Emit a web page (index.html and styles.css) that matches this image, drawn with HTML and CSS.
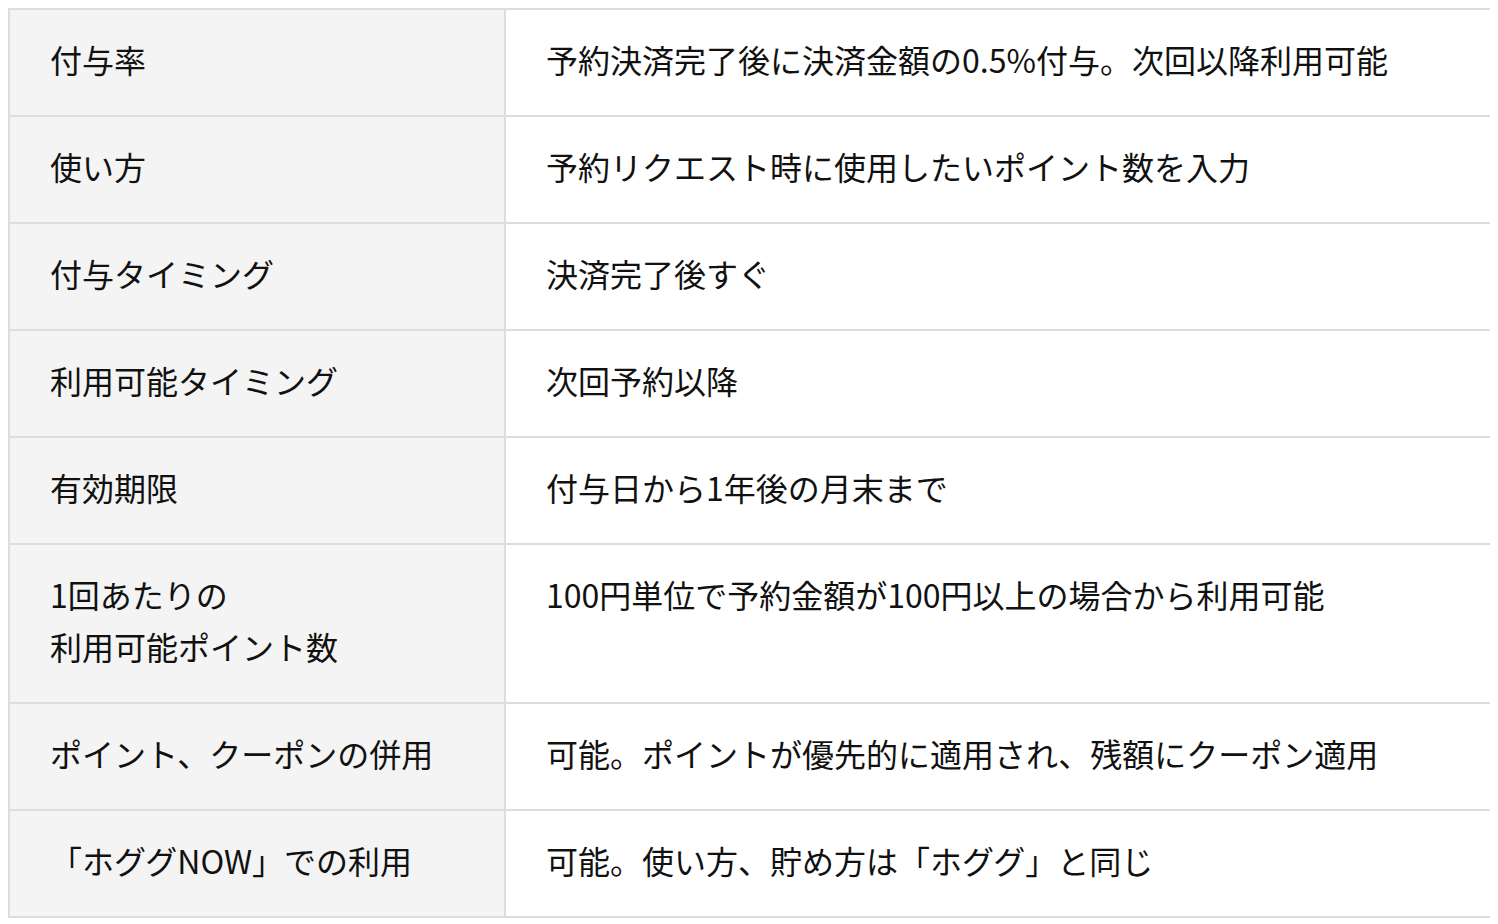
FILE: index.html
```html
<!DOCTYPE html>
<html lang="ja">
<head>
<meta charset="utf-8">
<link rel="stylesheet" href="styles.css">
</head>
<body>
<table class="info">
  <tr><th>付与率</th><td>予約決済完了後に決済金額の0.5%付与。次回以降利用可能</td></tr>
  <tr><th>使い方</th><td>予約リクエスト時に使用したいポイント数を入力</td></tr>
  <tr><th>付与タイミング</th><td>決済完了後すぐ</td></tr>
  <tr><th>利用可能タイミング</th><td>次回予約以降</td></tr>
  <tr><th>有効期限</th><td>付与日から1年後の月末まで</td></tr>
  <tr><th>1回あたりの<br>利用可能ポイント数</th><td>100円単位で予約金額が100円以上の場合から利用可能</td></tr>
  <tr><th>ポイント、クーポンの併用</th><td>可能。ポイントが優先的に適用され、残額にクーポン適用</td></tr>
  <tr><th>「ホググNOW」での利用</th><td>可能。使い方、貯め方は「ホググ」と同じ</td></tr>
</table>
</body>
</html>
```
FILE: styles.css
```css
html, body {
  background: #ffffff;
}
body {
  margin: 8px;
  font-family: "Noto Sans CJK JP", "Noto Sans", sans-serif;
  color: #111111;
}
.info {
  width: 1484px;
  border-collapse: collapse;
  table-layout: fixed;
}
.info th,
.info td {
  border: 2px solid #dddddd;
  padding: 23px 40px 30px 40px;
  font-size: 32px;
  line-height: 52px;
  font-weight: 400;
  text-align: left;
  vertical-align: top;
}
.info th {
  width: 414px;
  background: #f4f4f4;
}
.info td {
  background: #ffffff;
}
```
